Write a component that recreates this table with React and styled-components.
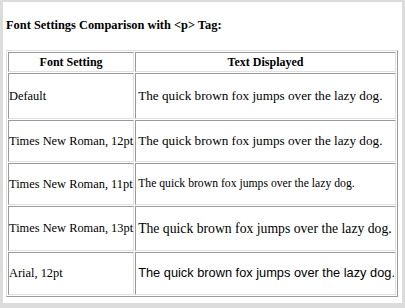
import React from 'react'
import styled, { createGlobalStyle } from 'styled-components'

const GlobalStyle = createGlobalStyle`
html, body {
margin: 0;
padding: 0;
background: #ffffff;
}
body {
font-family: "Liberation Serif", "Times New Roman", serif;
color: #000;
}
`;

const Frame = styled.div`
width: 405px;
height: 308px;
box-sizing: border-box;
border-style: solid;
border-color: #dcdcdc;
border-width: 2px 3px 5px 3px;
padding: 0 6px 0 3px;
overflow: hidden;
`;

const Heading = styled.p`
margin: 15px 0 17px;
font-size: 12.4px;
font-weight: bold;
line-height: 16px;
`;

const Table = styled.table`
width: 390px;
border: 1px solid;
border-color: #e0e0e0 #9a9a9a #9a9a9a #e0e0e0;
border-spacing: 1px;
font-size: 12.4px;
`;

const HeadCell = styled.th`
border: 1px solid;
border-color: #9a9a9a #e0e0e0 #e0e0e0 #9a9a9a;
padding: 2px 0;
font-size: 12px;
font-weight: bold;
text-align: center;
line-height: 14px;
${({ $wide }) => !$wide && 'width: 126px;'}
`;

const Cell = styled.td`
border: 1px solid;
border-color: #9a9a9a #e0e0e0 #e0e0e0 #9a9a9a;
padding: 1px 0 1px ${({ $pad }) => ($pad ? 2 : 0)}px;
height: ${({ $h }) => $h}px;
vertical-align: middle;
white-space: nowrap;
`;

const Sample = styled.p`
margin: 0;
font-family: ${({ $font }) => $font};
font-size: ${({ $size }) => $size}px;
line-height: 1.15;
`;

const serif = '"Liberation Serif", "Times New Roman", serif';
const sans = '"Liberation Sans", Arial, sans-serif';

const rows = [
  { label: 'Default', font: serif, size: 13.2, h: 42 },
  { label: 'Times New Roman, 12pt', font: serif, size: 13.2, h: 38 },
  { label: 'Times New Roman, 11pt', font: serif, size: 11.7, h: 38 },
  { label: 'Times New Roman, 13pt', font: serif, size: 13.7, h: 41 },
  { label: 'Arial, 12pt', font: sans, size: 12.8, h: 39 },
];

export default function App() {
  return (
    <>
      <GlobalStyle />
      <Frame>
        <Heading>Font Settings Comparison with &lt;p&gt; Tag:</Heading>
        <Table>
          <thead>
            <tr>
              <HeadCell>Font Setting</HeadCell>
              <HeadCell $wide>Text Displayed</HeadCell>
            </tr>
          </thead>
          <tbody>
            {rows.map((r) => (
              <tr key={r.label}>
                <Cell $h={r.h}>{r.label}</Cell>
                <Cell $h={r.h} $pad>
                  <Sample $font={r.font} $size={r.size}>
                    The quick brown fox jumps over the lazy dog.
                  </Sample>
                </Cell>
              </tr>
            ))}
          </tbody>
        </Table>
      </Frame>
    </>
  )
}
